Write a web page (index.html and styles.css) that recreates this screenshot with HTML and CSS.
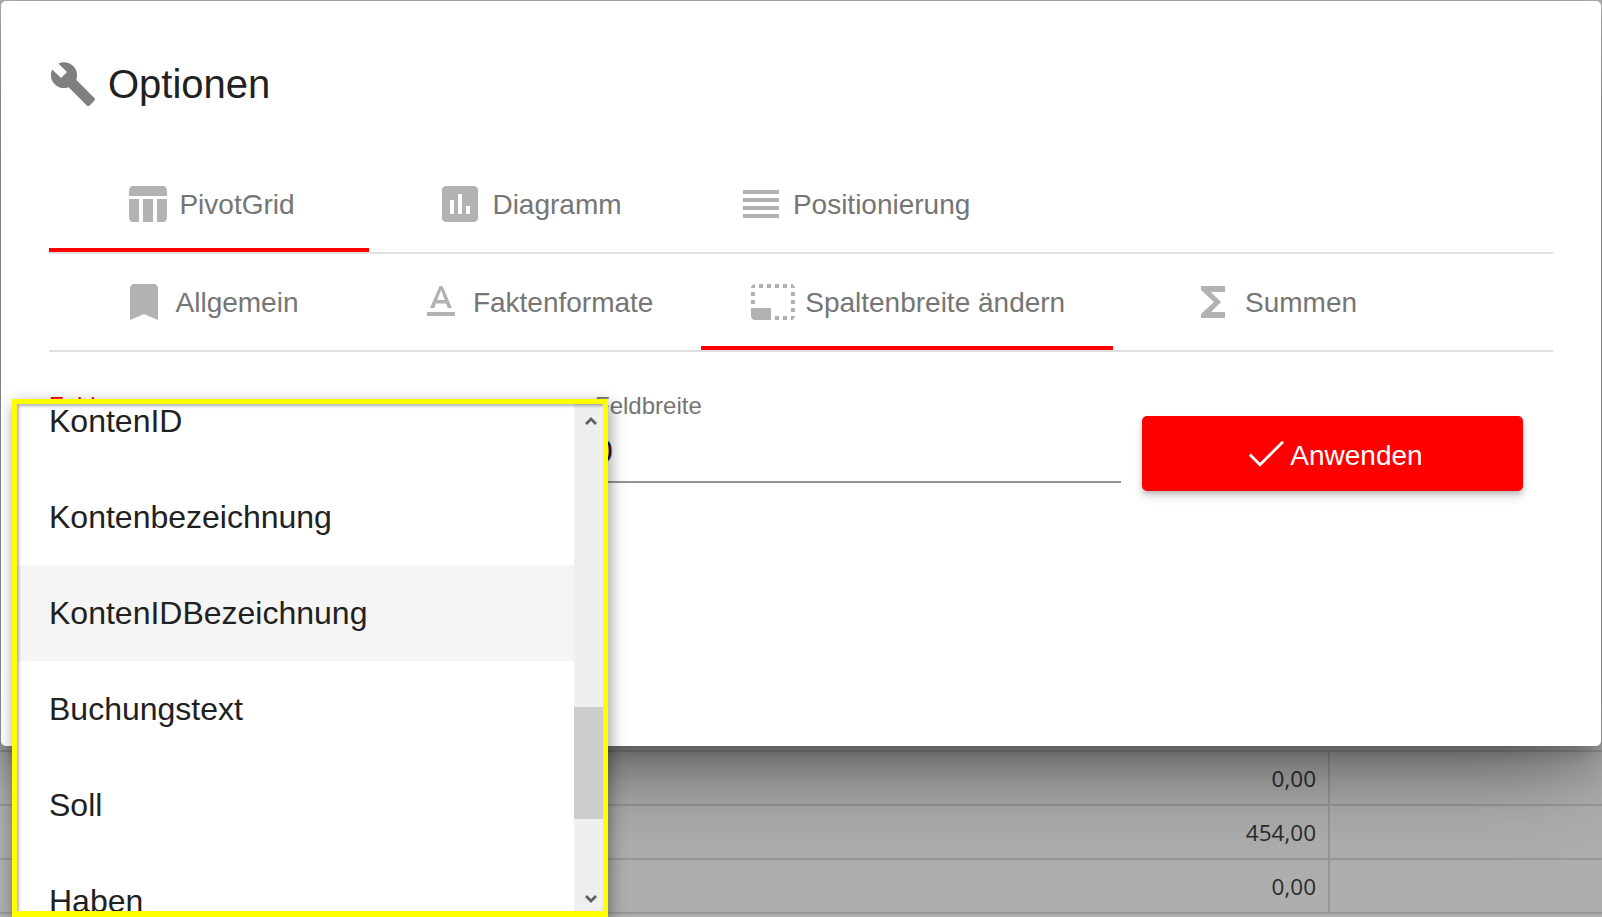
FILE: index.html
```html
<!DOCTYPE html>
<html lang="de">
<head>
    <meta charset="UTF-8">
    <meta name="viewport" content="width=device-width, initial-scale=1.0">
    <title>Optionen</title>
    <link rel="stylesheet" href="styles.css">
</head>
<body>
    <!-- Tabelle hinter dem Dialog -->
    <div class="grid-behind">
        <div class="grid-row"><div class="grid-cell">0,00</div><div class="grid-rest"></div></div>
        <div class="grid-row"><div class="grid-cell">454,00</div><div class="grid-rest"></div></div>
        <div class="grid-row"><div class="grid-cell">0,00</div><div class="grid-rest"></div></div>
    </div>

    <div class="dialog">
        <div class="dialog-title">
            <svg class="icon icon-title" viewBox="0 0 24 24"><path d="M22.7 19l-9.1-9.1c.9-2.3.4-5-1.5-6.9-2-2-5-2.4-7.4-1.3L9 6 6 9 1.6 4.7C.4 7.1.9 10.1 2.9 12.1c1.9 1.9 4.6 2.4 6.9 1.5l9.1 9.1c.4.4 1 .4 1.4 0l2.3-2.3c.5-.4.5-1.1.1-1.4z"/></svg>
            <h1>Optionen</h1>
        </div>

        <div class="tabs">
            <div class="tab active">
                <svg class="icon" viewBox="0 0 24 24"><path d="M5 3h15c1 0 2 1 2 2v3H3V5c0-1 1-2 2-2zM3 9.5h5V21H5c-1 0-2-1-2-2V9.5zM10 9.5h5V21h-5zM17 9.5h5V19c0 1-1 2-2 2h-3z"/></svg>
                <span>PivotGrid</span>
            </div>
            <div class="tab">
                <svg class="icon" viewBox="0 0 24 24"><path d="M19 3H5c-1.1 0-2 .9-2 2v14c0 1.1.9 2 2 2h14c1.1 0 2-.9 2-2V5c0-1.1-.9-2-2-2zM9 17H7v-7h2v7zm4 0h-2V7h2v10zm4 0h-2v-4h2v4z"/></svg>
                <span>Diagramm</span>
            </div>
            <div class="tab">
                <svg class="icon" viewBox="0 0 24 24"><path d="M3 15h18v-2H3v2zm0 4h18v-2H3v2zm0-8h18V9H3v2zm0-6v2h18V5H3z"/></svg>
                <span>Positionierung</span>
            </div>
        </div>

        <div class="tabs">
            <div class="tab">
                <svg class="icon" viewBox="0 0 24 24"><path d="M17 3H7c-1.1 0-1.99.9-1.99 2L5 21l7-3 7 3V5c0-1.1-.9-2-2-2z"/></svg>
                <span>Allgemein</span>
            </div>
            <div class="tab">
                <svg class="icon" viewBox="0 0 24 24"><path d="M5 17v2h14v-2H5zm4.5-4.2h5l.9 2.2h2.1L12.75 4h-1.5L6.5 15h2.1l.9-2.2zM12 5.98L13.87 11h-3.74L12 5.98z"/></svg>
                <span>Faktenformate</span>
            </div>
            <div class="tab active">
                <svg class="icon" viewBox="0 0 24 24"><path d="M23 15h-2v2h2v-2zm0-4h-2v2h2v-2zm0 8h-2v2c1 0 2-1 2-2zM15 3h-2v2h2V3zm8 4h-2v2h2V7zm-2-4v2h2c0-1-1-2-2-2zM3 21h8v-6H1v4c0 1.1.9 2 2 2zM3 7H1v2h2V7zm12 12h-2v2h2v-2zm4-16h-2v2h2V3zm0 16h-2v2h2v-2zM3 3C2 3 1 4 1 5h2V3zm0 8H1v2h2v-2zm8-8H9v2h2V3zM7 3H5v2h2V3z"/></svg>
                <span>Spaltenbreite ändern</span>
            </div>
            <div class="tab">
                <svg class="icon" viewBox="0 0 24 24"><path d="M18 4H6v2l6.5 6L6 18v2h12v-3h-7l5-5-5-5h7z"/></svg>
                <span>Summen</span>
            </div>
        </div>

        <div class="form-row">
            <div class="field">
                <label class="field-label field-label-red">Feld</label>
            </div>
            <div class="field">
                <label class="field-label">Feldbreite</label>
                <div class="field-value">0</div>
            </div>
            <button class="apply-button">
                <svg class="icon icon-check" viewBox="0 0 24 24"><path d="M9 16.4L4.4 11.8l-1 1L9 18.4 21 6.4l-1-1z"/></svg>
                <span>Anwenden</span>
            </button>
        </div>
    </div>

    <div class="dropdown">
        <ul class="dropdown-list">
            <li>KontenID</li>
            <li>Kontenbezeichnung</li>
            <li class="selected">KontenIDBezeichnung</li>
            <li>Buchungstext</li>
            <li>Soll</li>
            <li>Haben</li>
        </ul>
        <div class="scrollbar">
            <svg class="arrow" viewBox="0 0 12 8"><path d="M1 7l5-5 5 5"/></svg>
            <div class="scroll-track"><div class="scroll-thumb"></div></div>
            <svg class="arrow arrow-down" viewBox="0 0 12 8"><path d="M1 1l5 5 5-5"/></svg>
        </div>
    </div>
</body>
</html>
```

FILE: styles.css
```css
* {
    box-sizing: border-box;
}
html, body {
    margin: 0;
    height: 917px;
    overflow: hidden;
}
body {
    position: relative;
    font-family: "Liberation Sans", Arial, sans-serif;
    background-color: #aeaeae;
}

/* Tabelle hinter dem Dialog */
.grid-behind {
    padding-top: 750px;
    font-family: "Open Sans", sans-serif;
    font-size: 22.5px;
    color: #2b2b2b;
}
.grid-row {
    display: flex;
    height: 54px;
    border-top: 2px solid #989898;
}
.grid-row:last-child {
    height: 56px;
    border-bottom: 2px solid #989898;
}
.grid-cell {
    width: 1330px;
    padding-right: 12px;
    border-right: 2px solid #989898;
    text-align: right;
    line-height: 54px;
}
.grid-rest {
    flex: 1;
}

/* Dialog */
.dialog {
    position: absolute;
    top: 1px;
    left: 1px;
    width: 1600px;
    height: 745px;
    padding: 59px 48px 0;
    background: white;
    border-radius: 5px;
    box-shadow: 0 11px 15px -7px rgba(0, 0, 0, 0.2), 0 24px 38px 3px rgba(0, 0, 0, 0.14), 0 30px 100px -20px rgba(0, 0, 0, 0.45);
}
.dialog-title {
    display: flex;
    align-items: center;
    gap: 11px;
    height: 48px;
    margin-bottom: 48px;
}
h1 {
    margin: 0;
    font-size: 40px;
    font-weight: normal;
    color: #212121;
}
.icon {
    width: 48px;
    height: 48px;
    flex: none;
    fill: #b2b2b2;
}
.icon-title {
    fill: #7f7f7f;
}

/* Tabs */
.tabs {
    display: flex;
    border-bottom: 2px solid #e0e0e0;
}
.tab {
    display: flex;
    align-items: center;
    justify-content: center;
    gap: 8px;
    min-width: 320px;
    height: 96px;
    padding: 24px 47.9px 20px;
    border-bottom: 4px solid transparent;
    font-size: 28px;
    color: #757575;
}
.tab span {
    padding-top: 2px;
}
.tab.active {
    border-bottom-color: #f00;
}

/* Formular */
.form-row {
    display: grid;
    grid-template-columns: 525px 526px 381px;
    column-gap: 21px;
    padding-top: 40px;
}
.field-label {
    display: block;
    height: 28px;
    font-size: 24px;
    line-height: 28px;
    color: #757575;
}
.field-label-red {
    color: #f00;
}
.field-value {
    height: 63px;
    padding-top: 13px;
    font-size: 32px;
    line-height: 37px;
    color: #212121;
    border-bottom: 2px solid #949494;
}
.apply-button {
    display: flex;
    align-items: center;
    justify-content: center;
    height: 75px;
    margin-top: 24px;
    padding: 0;
    background-color: #f00;
    color: white;
    border: none;
    border-radius: 5px;
    font-family: inherit;
    font-size: 28px;
    box-shadow: 0 3px 5px -1px rgba(0, 0, 0, 0.2), 0 6px 10px 0 rgba(0, 0, 0, 0.14);
}
.apply-button span {
    padding-top: 4px;
}
.icon-check {
    fill: white;
}

/* Auswahlliste */
.dropdown {
    position: absolute;
    top: 399px;
    left: 12px;
    width: 596px;
    height: 518px;
    display: flex;
    overflow: hidden;
    background: white;
    border: 5px solid #ff0;
    border-bottom-width: 6px;
    box-shadow: 2px 5px 15px rgba(0, 0, 0, 0.4);
}
.dropdown::after {
    content: "";
    position: absolute;
    top: 0;
    right: 0;
    bottom: 0;
    left: 0;
    box-shadow: inset 3px 3px 3px -1px rgba(0, 0, 0, 0.3);
}
.dropdown-list {
    flex: 1;
    margin: -31px 0 0;
    padding: 0;
    list-style: none;
    font-size: 32px;
    color: #212121;
}
.dropdown-list li {
    height: 96px;
    padding-left: 32px;
    line-height: 96px;
}
.dropdown-list li.selected {
    background-color: #f5f5f5;
}
.scrollbar {
    display: flex;
    flex-direction: column;
    align-items: center;
    width: 29px;
    background-color: #efefef;
}
.scroll-track {
    flex: 1;
    width: 100%;
}
.scroll-thumb {
    height: 112px;
    margin-top: 269px;
    background-color: #cdcdcd;
}
.arrow {
    width: 12px;
    height: 8px;
    margin: 13px 0 13px 4px;
    fill: none;
    stroke: #5f5f5f;
    stroke-width: 2.8;
}
.arrow-down {
    margin-top: 18px;
    margin-bottom: 8px;
}
```
